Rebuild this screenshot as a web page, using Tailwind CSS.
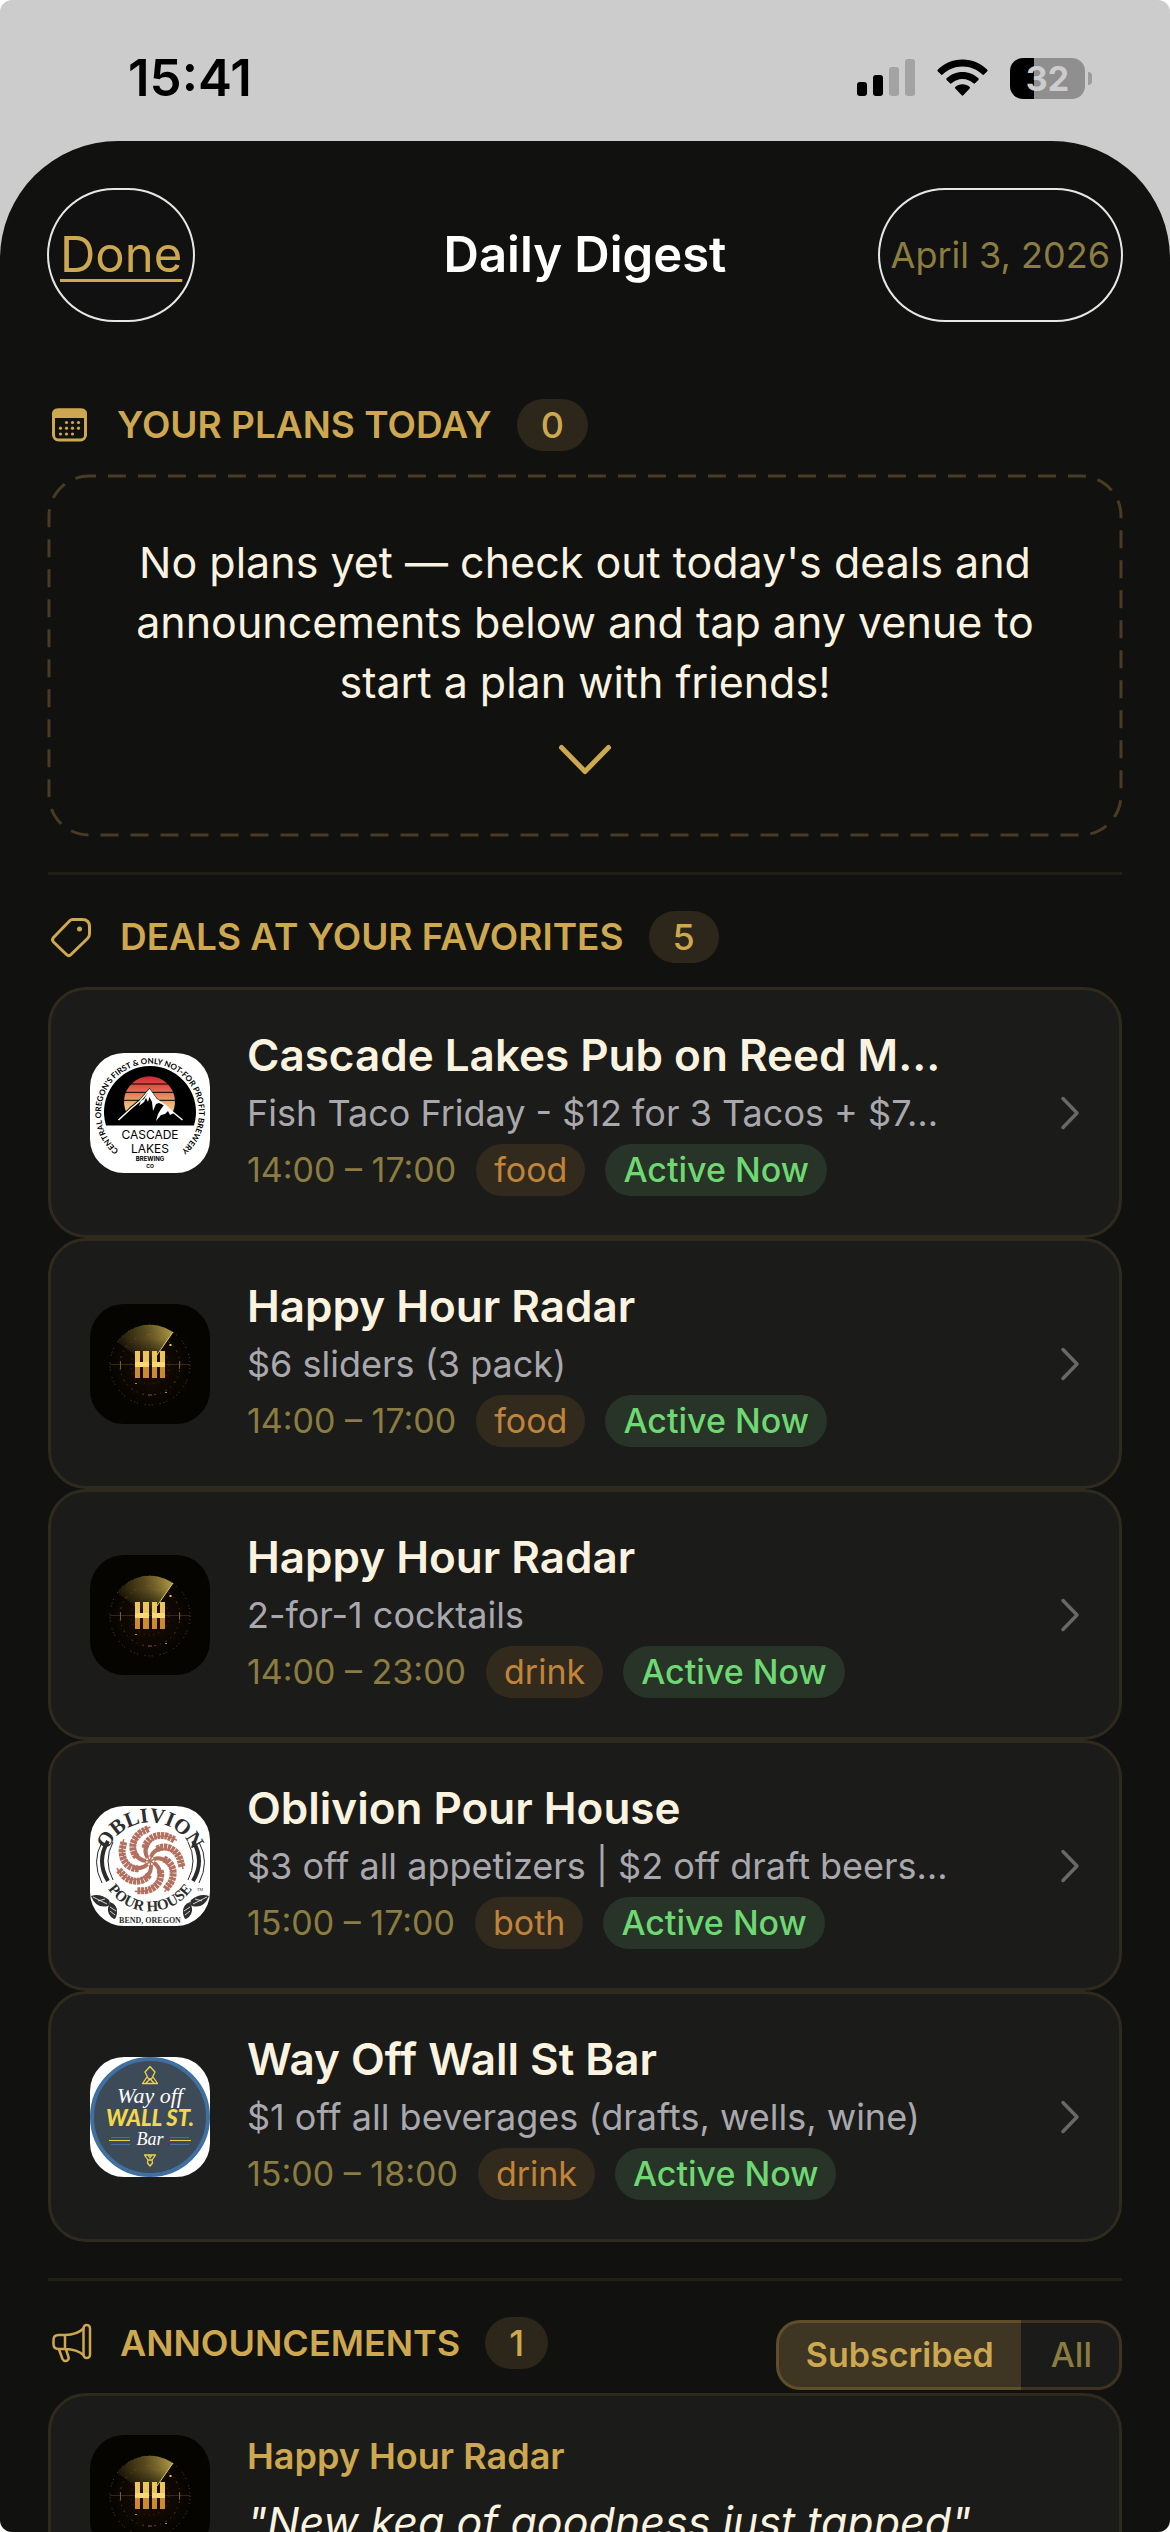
<!DOCTYPE html>
<html lang="en">
<head>
    <meta charset="UTF-8">
    <meta name="viewport" content="width=device-width, initial-scale=1.0">
    <title>Daily Digest - Happy Hour Radar</title>
    <script src="https://cdn.jsdelivr.net/npm/@tailwindcss/browser@4"></script>
</head>
<body class="bg-white font-['Inter','Liberation_Sans',sans-serif]">

    <!-- Shared artwork -->
    <svg class="absolute w-0 h-0" aria-hidden="true">
        <defs>
            <radialGradient id="hhGlow">
                <stop offset="0" stop-color="#1c0d02"/>
                <stop offset="1" stop-color="#050401"/>
            </radialGradient>
            <linearGradient id="hhSweep" x1="0" y1="0.3" x2="1" y2="0.1">
                <stop offset="0" stop-color="#8a7632" stop-opacity="0.15"/>
                <stop offset="0.5" stop-color="#8a7632" stop-opacity="0.6"/>
                <stop offset="1" stop-color="#b5a048"/>
            </linearGradient>
            <linearGradient id="hhFade" x1="0" y1="0" x2="0" y2="1">
                <stop offset="0.35" stop-color="#050401" stop-opacity="0"/>
                <stop offset="0.9" stop-color="#050401" stop-opacity="0.7"/>
            </linearGradient>
            <symbol id="hhLogo" viewBox="0 0 120 120">
                <rect width="120" height="120" fill="#050401"/>
                <circle cx="60" cy="61" r="42" fill="url(#hhGlow)"/>
                <path d="M60 61L27 38A40 40 0 0 1 83 28Z" fill="url(#hhSweep)"/>
                <path d="M60 61L27 38A40 40 0 0 1 83 28Z" fill="url(#hhFade)"/>
                <path d="M83 28L62 58" stroke="#e6cb5c" stroke-width="1"/>
                <g fill="none" stroke="#7d5a1e" stroke-width="1">
                    <circle cx="60" cy="61" r="40" stroke-dasharray="1 2 1 3 1 7" opacity="0.8"/>
                    <circle cx="60" cy="61" r="30" stroke-dasharray="1 4 2 5" opacity="0.7"/>
                    <circle cx="60" cy="61" r="19" stroke-dasharray="1 4" opacity="0.5"/>
                    <path d="M20 60.5H100" opacity="0.4"/>
                    <path d="M30.5 57V65M89.5 57V65M58 30.5H62M58 91H62"/>
                </g>
                <path d="M79 41H82M80.5 40V42" stroke="#f0c850" stroke-width="1"/>
                <path d="M45 79.5H47M75 88.5H77" stroke="#b98a2c" stroke-width="1"/>
                <path d="M45 47h5v11h-5zM53 47h6v11h-6zM62 47h5v11h-5zM70 47h5v11h-5z" fill="#eec557"/>
                <path d="M45 63h5v11h-5zM53 63h6v11h-6zM62 63h5v11h-5zM70 63h5v11h-5z" fill="#cb8a30"/>
                <path d="M45 58h14v5h-14zM62 58h13v5h-13z" fill="#fbd873"/>
            </symbol>
            <linearGradient id="sunset" x1="0" y1="0" x2="0" y2="1">
                <stop offset="0" stop-color="#cf2733"/>
                <stop offset="0.35" stop-color="#e2694d"/>
                <stop offset="0.7" stop-color="#f0b878"/>
                <stop offset="1" stop-color="#f4d293"/>
            </linearGradient>
            <path id="cascadeRing" d="M32 100A49 49 0 1 1 88 100"/>
            <path id="oblivionTop" d="M17 46A46 46 0 0 1 103 46"/>
            <path id="oblivionBottom" d="M16 80A51 51 0 0 0 104 80"/>
            <g id="wheatArm" fill="none" stroke="#b4705f">
                <path d="M60 55C62 46 72 40 82 45C88 48 92 54 93 63" stroke-width="1.5"/>
                <path d="M67 43C76 38 86 43 90 53L92 61" stroke-width="7" stroke-dasharray="3 0.7"/>
                <path d="M61 51C62 47 66 43 71 42" stroke-width="4"/>
            </g>
        </defs>
    </svg>

    <div class="h-screen flex flex-col overflow-hidden rounded-[12px] bg-[#cccccc]">

        <!-- Status bar -->
        <div class="h-[141px] shrink-0 flex items-center justify-between pl-[128px] pr-[78px] pt-[15px]">
            <span class="text-[51px] leading-[60px] font-semibold text-black">15:41</span>
            <div class="flex items-center gap-[22px]">
                <svg class="w-[58px] h-[38px]" viewBox="0 0 58 38" aria-label="Signal">
                    <rect x="0" y="23" width="10" height="14" rx="3" fill="#000"/>
                    <rect x="16" y="16" width="10" height="21" rx="3" fill="#000"/>
                    <rect x="32" y="8" width="10" height="29" rx="3" fill="#a3a3a3"/>
                    <rect x="48" y="0" width="10" height="37" rx="3" fill="#a3a3a3"/>
                </svg>
                <svg class="w-[51px] h-[38px]" viewBox="0 0 51 38" aria-label="Wi-Fi">
                    <path d="M25.5 0.5C35.5 0.5 44 4.5 50.3 10.7Q51 11.5 50.3 12.3L47 15.6Q46.2 16.3 45.4 15.6C40.2 10.7 33.5 7.6 25.5 7.6S10.8 10.7 5.6 15.6Q4.8 16.3 4 15.6L0.7 12.3Q0 11.5 0.7 10.7C7 4.5 15.5 0.5 25.5 0.5Z"/>
                    <path d="M25.5 13C31.8 13 37.3 15.4 41.4 19.3Q42.2 20.2 41.4 21L38 24.3Q37.2 25 36.4 24.3C33.5 21.6 29.8 20 25.5 20S17.5 21.6 14.6 24.3Q13.8 25 13 24.3L9.6 21Q8.8 20.2 9.6 19.3C13.7 15.4 19.2 13 25.5 13Z"/>
                    <path d="M25.5 25.2C28.3 25.2 30.8 26.2 32.7 27.9Q33.5 28.8 32.7 29.6L26.3 36.3Q25.5 37 24.7 36.3L18.3 29.6Q17.5 28.8 18.3 27.9C20.2 26.2 22.7 25.2 25.5 25.2Z"/>
                </svg>
                <div class="flex items-center gap-[3px]">
                    <div class="w-[75px] h-[41px] rounded-[13px] flex items-center justify-center bg-linear-to-r from-black from-32% to-[#8f8f8f] to-32% text-[#cccccc] text-[34px] leading-[41px] font-bold">32</div>
                    <div class="w-[4px] h-[13px] rounded-r-full bg-[#9c9c9c]"></div>
                </div>
            </div>
        </div>

        <!-- Sheet -->
        <div class="flex-1 min-h-0 flex flex-col bg-[#11110f] rounded-t-[118px]">
            <header class="shrink-0 grid grid-cols-[1fr_auto_1fr] items-center px-[47px] pt-[47px]">
                <button type="button" class="justify-self-start h-[134px] px-[11px] rounded-full border-2 border-white/90 bg-[#111112] text-[#cda850] text-[49px] leading-[60px] underline underline-offset-[7px] decoration-3 [text-decoration-skip-ink:none]">Done</button>
                <h1 class="text-[49px] leading-[60px] font-semibold text-white">Daily Digest</h1>
                <time datetime="2026-04-03" class="justify-self-end h-[134px] px-[11px] flex items-center rounded-full border-2 border-white/90 bg-[#111112] text-[#8b7d41] text-[36px] leading-[48px]">April 3, 2026</time>
            </header>

            <main class="flex-1 min-h-0 overflow-y-auto [scrollbar-width:none] px-[48px] pt-[77px]">

                <!-- Plans -->
                <section>
                    <div class="flex items-center mb-[24px]">
                        <svg class="w-[43px] h-[40px] mr-[26px]" viewBox="0 0 43 40" aria-hidden="true">
                            <rect x="5.5" y="5" width="32" height="30" rx="5" fill="none" stroke="#cda850" stroke-width="3"/>
                            <path d="M4 13V8.5A5 5 0 0 1 9 3.5H34A5 5 0 0 1 39 8.5V13Z" fill="#cda850"/>
                            <g fill="#cda850">
                                <circle cx="18.5" cy="17.5" r="1.6"/><circle cx="24.5" cy="17.5" r="1.6"/><circle cx="30.5" cy="17.5" r="1.6"/>
                                <circle cx="12.5" cy="23.2" r="1.6"/><circle cx="18.5" cy="23.2" r="1.6"/><circle cx="24.5" cy="23.2" r="1.6"/><circle cx="30.5" cy="23.2" r="1.6"/>
                                <circle cx="12.5" cy="29" r="1.6"/><circle cx="18.5" cy="29" r="1.6"/><circle cx="24.5" cy="29" r="1.6"/>
                            </g>
                        </svg>
                        <h2 class="text-[37px] leading-[48px] font-semibold text-[#cda850]">YOUR PLANS TODAY</h2>
                        <span class="ml-[25px] h-[52px] px-[24px] rounded-full bg-[#2d261a] text-[#cda850] text-[36px] leading-[52px] font-medium">0</span>
                    </div>
                    <div class="relative px-[78px] pt-[57px] pb-[59px] text-center">
                        <svg class="absolute left-px top-px w-[calc(100%-2px)] h-[calc(100%-2px)] overflow-visible" aria-hidden="true">
                            <rect width="100%" height="100%" rx="40" fill="none" stroke="#4a3c22" stroke-width="3" stroke-dasharray="18 12" stroke-dashoffset="11"/>
                        </svg>
                        <p class="text-[43px] leading-[60px] text-[#faf3e0]">No plans yet — check out today's deals and announcements below and tap any venue to start a plan with friends!</p>
                        <svg class="w-[56px] h-[34px] mx-auto mt-[31px]" viewBox="0 0 56 34" fill="none" stroke="#cda850" stroke-width="5" stroke-linecap="round" stroke-linejoin="round" aria-hidden="true">
                            <path d="M4.5 4.5L28 28.5L51.5 4.5"/>
                        </svg>
                    </div>
                </section>

                <hr class="my-[36px] border-0 h-[3px] bg-[#231f17]">

                <!-- Deals -->
                <section>
                    <div class="flex items-center mb-[24px]">
                        <svg class="w-[45px] h-[42px] mr-[27px]" viewBox="0 0 45 42" fill="none" stroke="#cda850" stroke-width="3" stroke-linejoin="round" aria-hidden="true">
                            <path d="M24.5 3.5H34Q41.5 3.5 41.5 10.5V18Q41.5 20.5 39.5 22.5L23 38.5Q20.8 40.7 18.5 38.5L5.5 26Q3.5 23.8 5.5 21.5L21 5.5Q22.5 3.5 24.5 3.5Z"/>
                            <circle cx="31.5" cy="13" r="2.5" fill="#cda850" stroke="none"/>
                        </svg>
                        <h2 class="text-[37px] leading-[48px] font-semibold text-[#cda850]">DEALS AT YOUR FAVORITES</h2>
                        <span class="ml-[25px] h-[52px] px-[24px] rounded-full bg-[#2d261a] text-[#cda850] text-[36px] leading-[52px] font-medium">5</span>
                    </div>

                    <ul>
                        <li>
                            <a href="#cascade-lakes" class="flex items-center min-h-[251px] pl-[39px] pr-[37px] rounded-[38px] border-3 border-[#2f2a1e] bg-[#1b1b19]">
                                <svg class="w-[120px] h-[120px] shrink-0 rounded-[34px] bg-white" viewBox="0 0 120 120" role="img" aria-label="Cascade Lakes Brewing Co">
                                    <path d="M16 72.5A46 46 0 1 1 104 72.5Z" fill="#000"/>
                                    <path d="M39 64A25.5 25.5 0 1 1 80 64Z" fill="url(#sunset)"/>
                                    <path d="M30 31H90M30 39.3H90M30 47.3H90" stroke="#000" stroke-width="1"/>
                                    <path d="M26 72L28 66L40 54L50 46L59.5 35L66 44L73 51L84 60L94 67V72Z" fill="#000"/>
                                    <path d="M28.5 67L41 55.5L44 53L50 48L59.5 37L66 46L73 51L92.5 67" fill="none" stroke="#fff" stroke-width="1.5"/>
                                    <path d="M59.5 37L54 46L51 48L49 53L54 49L56 45L58 49L59.5 44L62 49L63 58L66 51L69 50L74 52L71 56L68 61L66 68L71 62L75 61L78 58L80 62L84 60L76 52L66 46Z" fill="#fff"/>
                                    <g fill="#000" font-family="Inter, sans-serif" text-anchor="middle">
                                        <text x="60" y="86" font-size="12">CASCADE</text>
                                        <text x="60" y="100" font-size="12">LAKES</text>
                                        <text x="60" y="108" font-size="6" font-weight="700">BREWING</text>
                                        <text x="60" y="115" font-size="5" font-weight="700">CO</text>
                                        <text font-family="Lato, sans-serif" font-size="8" font-weight="700"><textPath href="#cascadeRing" startOffset="50%">CENTRAL OREGON'S FIRST &amp; ONLY NOT-FOR PROFIT BREWERY</textPath></text>
                                    </g>
                                </svg>
                                <div class="flex-1 min-w-0 ml-[37px] pb-[2px] flex flex-col gap-[7px]">
                                    <h3 class="text-[44px] leading-[54px] font-semibold text-[#faf3e0] truncate">Cascade Lakes Pub on Reed M…</h3>
                                    <p class="text-[36px] leading-[48px] text-[#a9a8ae] truncate">Fish Taco Friday - $12 for 3 Tacos + $7…</p>
                                    <div class="flex items-center gap-[20px] text-[34px] leading-[52px]">
                                        <span class="text-[#8b7d41]">14:00 – 17:00</span>
                                        <span class="px-[18px] rounded-full bg-[#332a1e] text-[#c0843a]">food</span>
                                        <span class="px-[18px] rounded-full bg-[#273427] text-[#6fd873] font-medium">Active Now</span>
                                    </div>
                                </div>
                                <svg class="w-[24px] h-[38px] shrink-0" viewBox="0 0 24 38" fill="none" stroke="#686867" stroke-width="3.5" stroke-linecap="round" stroke-linejoin="round" aria-hidden="true"><path d="M5 4.5L19 19L5 33.5"/></svg>
                            </a>
                        </li>
                        <li>
                            <a href="#happy-hour-radar-sliders" class="flex items-center min-h-[251px] pl-[39px] pr-[37px] rounded-[38px] border-3 border-[#2f2a1e] bg-[#1b1b19]">
                                <svg class="w-[120px] h-[120px] shrink-0 rounded-[34px]" role="img" aria-label="Happy Hour Radar"><use href="#hhLogo"/></svg>
                                <div class="flex-1 min-w-0 ml-[37px] pb-[2px] flex flex-col gap-[7px]">
                                    <h3 class="text-[44px] leading-[54px] font-semibold text-[#faf3e0] truncate">Happy Hour Radar</h3>
                                    <p class="text-[36px] leading-[48px] text-[#a9a8ae] truncate">$6 sliders (3 pack)</p>
                                    <div class="flex items-center gap-[20px] text-[34px] leading-[52px]">
                                        <span class="text-[#8b7d41]">14:00 – 17:00</span>
                                        <span class="px-[18px] rounded-full bg-[#332a1e] text-[#c0843a]">food</span>
                                        <span class="px-[18px] rounded-full bg-[#273427] text-[#6fd873] font-medium">Active Now</span>
                                    </div>
                                </div>
                                <svg class="w-[24px] h-[38px] shrink-0" viewBox="0 0 24 38" fill="none" stroke="#686867" stroke-width="3.5" stroke-linecap="round" stroke-linejoin="round" aria-hidden="true"><path d="M5 4.5L19 19L5 33.5"/></svg>
                            </a>
                        </li>
                        <li>
                            <a href="#happy-hour-radar-cocktails" class="flex items-center min-h-[251px] pl-[39px] pr-[37px] rounded-[38px] border-3 border-[#2f2a1e] bg-[#1b1b19]">
                                <svg class="w-[120px] h-[120px] shrink-0 rounded-[34px]" role="img" aria-label="Happy Hour Radar"><use href="#hhLogo"/></svg>
                                <div class="flex-1 min-w-0 ml-[37px] pb-[2px] flex flex-col gap-[7px]">
                                    <h3 class="text-[44px] leading-[54px] font-semibold text-[#faf3e0] truncate">Happy Hour Radar</h3>
                                    <p class="text-[36px] leading-[48px] text-[#a9a8ae] truncate">2-for-1 cocktails</p>
                                    <div class="flex items-center gap-[20px] text-[34px] leading-[52px]">
                                        <span class="text-[#8b7d41]">14:00 – 23:00</span>
                                        <span class="px-[18px] rounded-full bg-[#332a1e] text-[#c0843a]">drink</span>
                                        <span class="px-[18px] rounded-full bg-[#273427] text-[#6fd873] font-medium">Active Now</span>
                                    </div>
                                </div>
                                <svg class="w-[24px] h-[38px] shrink-0" viewBox="0 0 24 38" fill="none" stroke="#686867" stroke-width="3.5" stroke-linecap="round" stroke-linejoin="round" aria-hidden="true"><path d="M5 4.5L19 19L5 33.5"/></svg>
                            </a>
                        </li>
                        <li>
                            <a href="#oblivion" class="flex items-center min-h-[251px] pl-[39px] pr-[37px] rounded-[38px] border-3 border-[#2f2a1e] bg-[#1b1b19]">
                                <svg class="w-[120px] h-[120px] shrink-0 rounded-[34px] bg-white" viewBox="0 0 120 120" role="img" aria-label="Oblivion Pour House">
                                    <use href="#wheatArm"/>
                                    <use href="#wheatArm" transform="rotate(51 60 55)"/>
                                    <use href="#wheatArm" transform="rotate(103 60 55)"/>
                                    <use href="#wheatArm" transform="rotate(154 60 55)"/>
                                    <use href="#wheatArm" transform="rotate(206 60 55)"/>
                                    <use href="#wheatArm" transform="rotate(257 60 55)"/>
                                    <use href="#wheatArm" transform="rotate(309 60 55)"/>
                                    <g fill="none" stroke="#2b2b2b">
                                        <path d="M12 36Q1 56 12 77" stroke-width="1"/>
                                        <path d="M18 35Q6 55 18 75" stroke-width="4"/>
                                        <path d="M23 36Q13 55 23 74" stroke-width="1"/>
                                        <path d="M109 36Q120 56 109 77" stroke-width="1"/>
                                        <path d="M103 35Q115 55 103 75" stroke-width="4"/>
                                        <path d="M98 36Q108 55 98 74" stroke-width="1"/>
                                    </g>
                                    <g fill="#2e2e2e">
                                        <path d="M1 90Q10 87 19 94Q21 98 18 100Q6 103 1 90Z"/>
                                        <path d="M20 96Q28 99 27 107Q26 113 24 113Q17 109 18 102Z"/>
                                        <path d="M119 90Q110 87 101 94Q99 98 102 100Q114 103 119 90Z"/>
                                        <path d="M100 96Q92 99 93 107Q94 113 96 113Q103 109 102 102Z"/>
                                    </g>
                                    <path d="M3 91L17 98M8 95L15 93M20 101L26 105M20 105L25 109M117 91L103 98M112 95L105 93M100 101L94 105M100 105L95 109" stroke="#fff" stroke-width="0.8"/>
                                    <g fill="#2e2e2e" font-family="'Liberation Serif', serif" font-weight="700" text-anchor="middle">
                                        <text font-size="21"><textPath href="#oblivionTop" startOffset="50%">OBLIVION</textPath></text>
                                        <text font-size="15"><textPath href="#oblivionBottom" startOffset="50%">POUR HOUSE</textPath></text>
                                        <text x="60" y="117" font-size="8">BEND, OREGON</text>
                                        <text x="110" y="85" font-size="4" font-weight="400">TM</text>
                                    </g>
                                </svg>
                                <div class="flex-1 min-w-0 ml-[37px] pb-[2px] flex flex-col gap-[7px]">
                                    <h3 class="text-[44px] leading-[54px] font-semibold text-[#faf3e0] truncate">Oblivion Pour House</h3>
                                    <p class="text-[36px] leading-[48px] text-[#a9a8ae] truncate">$3 off all appetizers | $2 off draft beers…</p>
                                    <div class="flex items-center gap-[20px] text-[34px] leading-[52px]">
                                        <span class="text-[#8b7d41]">15:00 – 17:00</span>
                                        <span class="px-[18px] rounded-full bg-[#332a1e] text-[#c0843a]">both</span>
                                        <span class="px-[18px] rounded-full bg-[#273427] text-[#6fd873] font-medium">Active Now</span>
                                    </div>
                                </div>
                                <svg class="w-[24px] h-[38px] shrink-0" viewBox="0 0 24 38" fill="none" stroke="#686867" stroke-width="3.5" stroke-linecap="round" stroke-linejoin="round" aria-hidden="true"><path d="M5 4.5L19 19L5 33.5"/></svg>
                            </a>
                        </li>
                        <li>
                            <a href="#way-off-wall-st" class="flex items-center min-h-[251px] pl-[39px] pr-[37px] rounded-[38px] border-3 border-[#2f2a1e] bg-[#1b1b19]">
                                <svg class="w-[120px] h-[120px] shrink-0 rounded-[34px] bg-white" viewBox="0 0 120 120" role="img" aria-label="Way Off Wall St Bar">
                                    <circle cx="60" cy="60" r="58" fill="#3d4b59" stroke="#3f70a0" stroke-width="4"/>
                                    <g fill="none" stroke="#ecd54a" stroke-width="1.3" stroke-linejoin="round">
                                        <path d="M60 9.5L65 15L61.5 22H58.5L55 15Z"/>
                                        <path d="M57 20L52.5 26.5H67.5L63 20M56 26L60 22L64 26"/>
                                        <path d="M54.5 98H65.5L62 103H58ZM58 98L60 101L62 98M58 103L57.5 106L60 109L62.5 106L62 103"/>
                                    </g>
                                    <path d="M21 80.5H40M21 87.5H40M80 80.5H99M80 87.5H99" stroke="#3f70a0" stroke-width="1"/>
                                    <path d="M19 83.5H40M80 83.5H101" stroke="#ecd54a" stroke-width="1"/>
                                    <text x="60" y="46" fill="#fff" font-family="'Liberation Serif', serif" font-style="italic" font-size="22" text-anchor="middle">Way off</text>
                                    <text x="60" y="69" fill="#f2d94a" font-family="Lato, sans-serif" font-weight="900" font-style="italic" font-size="22" text-anchor="middle">WALL ST.</text>
                                    <text x="60" y="88" fill="#fff" font-family="'Liberation Serif', serif" font-style="italic" font-size="18" text-anchor="middle">Bar</text>
                                </svg>
                                <div class="flex-1 min-w-0 ml-[37px] pb-[2px] flex flex-col gap-[7px]">
                                    <h3 class="text-[44px] leading-[54px] font-semibold text-[#faf3e0] truncate">Way Off Wall St Bar</h3>
                                    <p class="text-[36px] leading-[48px] text-[#a9a8ae] truncate">$1 off all beverages (drafts, wells, wine)</p>
                                    <div class="flex items-center gap-[20px] text-[34px] leading-[52px]">
                                        <span class="text-[#8b7d41]">15:00 – 18:00</span>
                                        <span class="px-[18px] rounded-full bg-[#332a1e] text-[#c0843a]">drink</span>
                                        <span class="px-[18px] rounded-full bg-[#273427] text-[#6fd873] font-medium">Active Now</span>
                                    </div>
                                </div>
                                <svg class="w-[24px] h-[38px] shrink-0" viewBox="0 0 24 38" fill="none" stroke="#686867" stroke-width="3.5" stroke-linecap="round" stroke-linejoin="round" aria-hidden="true"><path d="M5 4.5L19 19L5 33.5"/></svg>
                            </a>
                        </li>
                    </ul>
                </section>

                <hr class="my-[36px] border-0 h-[3px] bg-[#231f17]">

                <!-- Announcements -->
                <section>
                    <div class="flex items-start justify-between pb-[3px]">
                        <div class="flex items-center">
                            <svg class="w-[45px] h-[42px] mr-[27px]" viewBox="0 0 45 42" fill="none" stroke="#cda850" stroke-width="2.5" stroke-linejoin="round" stroke-linecap="round" aria-hidden="true">
                                <rect x="35.5" y="3" width="6.5" height="33" rx="3.2"/>
                                <path d="M35.5 6.5C31 11 24 12.8 17 13H10.5Q5.5 13 5.5 18V22Q5.5 27 10.5 27H17C24 27.2 31 29 35.5 33M17 13V27"/>
                                <path d="M11 27.5L14.5 37Q16 39.8 18.8 38.8Q21.3 37.5 20.5 35L18 27.5"/>
                            </svg>
                            <h2 class="text-[36px] leading-[48px] font-semibold text-[#cda850]">ANNOUNCEMENTS</h2>
                            <span class="ml-[25px] h-[52px] px-[24px] rounded-full bg-[#2d261a] text-[#cda850] text-[36px] leading-[52px] font-medium">1</span>
                        </div>
                        <div role="group" aria-label="Filter announcements" class="mt-[3px] h-[70px] flex text-[34px] leading-[40px] font-medium">
                            <button type="button" aria-pressed="true" class="px-[27px] rounded-l-[24px] border-3 border-r-0 border-[#5f4e2a] bg-[#3e3523] text-[#cda850] font-semibold">Subscribed</button>
                            <button type="button" aria-pressed="false" class="pl-[30px] pr-[27px] rounded-r-[24px] border-3 border-l-0 border-[#3e3322] bg-[#1b1b19] text-[#8b7d41]">All</button>
                        </div>
                    </div>
                    <article class="flex items-start min-h-[251px] px-[39px] py-[39px] rounded-[38px] border-3 border-[#2f2a1e] bg-[#1b1b19]">
                        <svg class="w-[120px] h-[120px] shrink-0 rounded-[34px]" role="img" aria-label="Happy Hour Radar"><use href="#hhLogo"/></svg>
                        <div class="flex-1 min-w-0 ml-[37px] -mt-[3px]">
                            <h3 class="text-[36px] leading-[48px] font-semibold text-[#cda850]">Happy Hour Radar</h3>
                            <p class="mt-[12px] text-[43px] leading-[60px] italic text-[#faf3e0]">"New keg of goodness just tapped"</p>
                        </div>
                    </article>
                </section>
            </main>
        </div>
    </div>
</body>
</html>
